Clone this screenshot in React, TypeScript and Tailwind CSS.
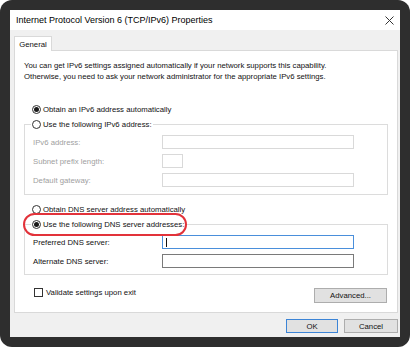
import React from "react"

const Radio: React.FC<{ checked?: boolean }> = ({ checked }) => (
  <span className="flex h-[9px] w-[9px] shrink-0 items-center justify-center rounded-full border border-[#333] bg-white">
    {checked && <span className="h-[5px] w-[5px] rounded-full bg-[#1a1a1a]" />}
  </span>
)

const Field: React.FC<{ label: string; width?: string; border?: string; disabled?: boolean; caret?: boolean }> = ({
  label,
  width = "w-[192px]",
  border = "border-[#d9d9d9]",
  disabled,
  caret,
}) => (
  <div className="flex h-[14px] items-center">
    <span className={`w-[129px] ${disabled ? "text-[#a0a0a0]" : "text-[#111]"}`}>{label}</span>
    <div className={`flex h-[14px] items-center border bg-white pl-[3px] ${width} ${border}`}>
      {caret && <span className="h-[9px] w-px bg-[#111]" />}
    </div>
  </div>
)

export default function App() {
  return (
    <div className="h-[349px] w-[412px] bg-white font-['Liberation_Sans',Arial,sans-serif] text-[7.75px] leading-[11px] text-[#111]">
      <div className="h-[347px] w-[410px] rounded-[12px] bg-[#2e2e2e] p-[10px]">
        <div className="flex h-[327px] w-[390px] flex-col bg-[#f0f0f0]">
          {/* title bar */}
          <div className="flex h-[20px] items-center justify-between bg-white pl-[6px] pr-[5px]">
            <span className="text-[9px] text-black">Internet Protocol Version 6 (TCP/IPv6) Properties</span>
            <svg width="9" height="9" viewBox="0 0 9 9" className="mr-[1px]">
              <path d="M0.5 0.5 L8.5 8.5 M8.5 0.5 L0.5 8.5" stroke="#333" strokeWidth="1" />
            </svg>
          </div>

          {/* tab strip */}
          <div className="ml-[4px] mt-[6px] flex">
            <div className="relative z-10 -mb-px flex h-[15px] w-[38px] items-center justify-center border border-b-0 border-[#d9d9d9] bg-white">
              General
            </div>
          </div>

          {/* panel */}
          <div className="ml-[4px] mr-[2px] flex h-[263px] flex-col border border-[#d9d9d9] bg-white pl-[9px] pr-[9px] pt-[9px]">
            <p>You can get IPv6 settings assigned automatically if your network supports this capability.</p>
            <p>Otherwise, you need to ask your network administrator for the appropriate IPv6 settings.</p>

            <div className="mt-[22px] flex h-[11px] items-center gap-[2px] pl-[8px]">
              <Radio checked />
              <span>Obtain an IPv6 address automatically</span>
            </div>

            <fieldset className="mt-[4px] border border-[#dcdcdc] pb-[7px] pl-[8px]">
              <legend className="ml-[-2px] flex h-[11px] items-center gap-[2px] px-[1px]">
                <Radio />
                <span>Use the following IPv6 address:</span>
              </legend>
              <div className="mt-[5px] flex flex-col gap-[5px]">
                <Field label="IPv6 address:" disabled />
                <Field label="Subnet prefix length:" width="w-[21px]" disabled />
                <Field label="Default gateway:" disabled />
              </div>
            </fieldset>

            <div className="mt-[9px] flex h-[11px] items-center gap-[2px] pl-[8px]">
              <Radio />
              <span>Obtain DNS server address automatically</span>
            </div>

            <fieldset className="mt-[4px] border border-[#dcdcdc] pb-[6px] pl-[8px]">
              <legend className="relative ml-[-2px] flex h-[11px] items-center gap-[2px] px-[1px]">
                <Radio checked />
                <span>Use the following DNS server addresses:</span>
                <span className="absolute -bottom-[6px] -left-[8px] -right-[2px] -top-[6px] rounded-full border-2 border-[#e2323a]" />
              </legend>
              <div className="mt-[5px] flex flex-col gap-[5px]">
                <Field label="Preferred DNS server:" border="border-[#4a8fdb]" caret />
                <Field label="Alternate DNS server:" border="border-[#7a7a7a]" />
              </div>
            </fieldset>

            <div className="mt-[12px] flex items-start justify-between pl-[10px] pr-[1px]">
              <div className="flex h-[11px] items-center gap-[3px]">
                <span className="h-[9px] w-[9px] border border-[#333] bg-white" />
                <span>Validate settings upon exit</span>
              </div>
              <button className="mt-[1px] flex h-[15px] w-[73px] items-center justify-center border border-[#adadad] bg-[#e1e1e1]">
                Advanced...
              </button>
            </div>
          </div>

          {/* buttons */}
          <div className="mr-[2px] mt-[6px] flex justify-end gap-[6px]">
            <button className="flex h-[14px] w-[52px] items-center justify-center border border-[#3c84d6] bg-[#e1e1e1]">OK</button>
            <button className="flex h-[14px] w-[54px] items-center justify-center border border-[#adadad] bg-[#e1e1e1]">Cancel</button>
          </div>
        </div>
      </div>
    </div>
  )
}
